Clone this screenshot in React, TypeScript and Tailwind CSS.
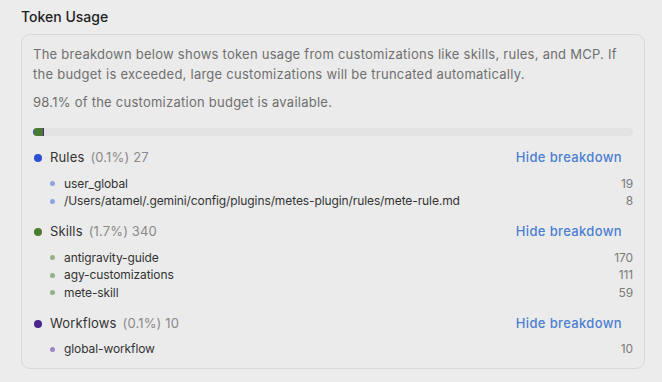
const groups = [
  {
    name: "Rules",
    pct: "(0.1%)",
    total: 27,
    dot: "bg-[#2b52d4]",
    subDot: "bg-[#8da2e2]",
    items: [
      { label: "user_global", value: 19 },
      { label: "/Users/atamel/.gemini/config/plugins/metes-plugin/rules/mete-rule.md", value: 8 },
    ],
  },
  {
    name: "Skills",
    pct: "(1.7%)",
    total: 340,
    dot: "bg-[#4b7a31]",
    subDot: "bg-[#93b086]",
    items: [
      { label: "antigravity-guide", value: 170 },
      { label: "agy-customizations", value: 111 },
      { label: "mete-skill", value: 59 },
    ],
  },
  {
    name: "Workflows",
    pct: "(0.1%)",
    total: 10,
    dot: "bg-[#4a258f]",
    subDot: "bg-[#9d86c6]",
    items: [{ label: "global-workflow", value: 10 }],
  },
];

export default function App() {
  return (
    <div className="min-h-screen w-[662px] h-[382px] bg-[#ececec] pl-[21px] pr-[17px] pt-[8px] font-['Inter',sans-serif] text-[#333]">
      <h2 className="text-[14px] leading-[18px] font-medium text-[#1f1f1f]">Token Usage</h2>

      <div className="mt-[8px] rounded-[9px] border border-[#d8d8d8] bg-[#ebebeb] px-[11px] pt-[9px] pb-[10px]">
        <p className="text-[13px] leading-[20px] tracking-[0.25px] text-[#6f6f6f]">
          The breakdown below shows token usage from customizations like skills, rules, and MCP. If
          the budget is exceeded, large customizations will be truncated automatically.
        </p>
        <p className="mt-[8px] text-[13px] leading-[20px] tracking-[0.25px] text-[#6f6f6f]">
          98.1% of the customization budget is available.
        </p>

        {/* budget bar */}
        <div className="mt-[16px] flex h-[8px] w-full overflow-hidden rounded-full bg-[#e3e3e3]">
          <div className="h-full w-[1px] bg-[#2b52d4]" />
          <div className="h-full w-[9px] bg-[#4b7a31]" />
          <div className="h-full w-[1px] bg-[#4a258f]" />
        </div>

        <div className="mt-[12px] flex flex-col gap-[12px]">
          {groups.map((g) => (
            <div key={g.name}>
              <div className="flex h-[20px] items-center text-[13px] tracking-[0.15px]">
                <span className={`ml-[1px] h-[8px] w-[8px] rounded-full ${g.dot}`} />
                <span className="ml-[8px] text-[#333]">{g.name}</span>
                <span className="ml-[6px] text-[#8a8a8a]">
                  {g.pct} {g.total}
                </span>
                <button className="ml-auto mr-[11px] font-medium tracking-[0.35px] text-[#4b7fd2]">
                  Hide breakdown
                </button>
              </div>
              <ul className="mt-[7px] flex flex-col">
                {g.items.map((it) => (
                  <li key={it.label} className="flex h-[17.5px] items-center text-[12px] tracking-[-0.1px]">
                    <span className={`ml-[17px] h-[5px] w-[5px] rounded-full ${g.subDot}`} />
                    <span className="ml-[9px] text-[#333]">{it.label}</span>
                    <span className="ml-auto text-[#7a7a7a]">{it.value}</span>
                  </li>
                ))}
              </ul>
            </div>
          ))}
        </div>
      </div>
    </div>
  );
}
